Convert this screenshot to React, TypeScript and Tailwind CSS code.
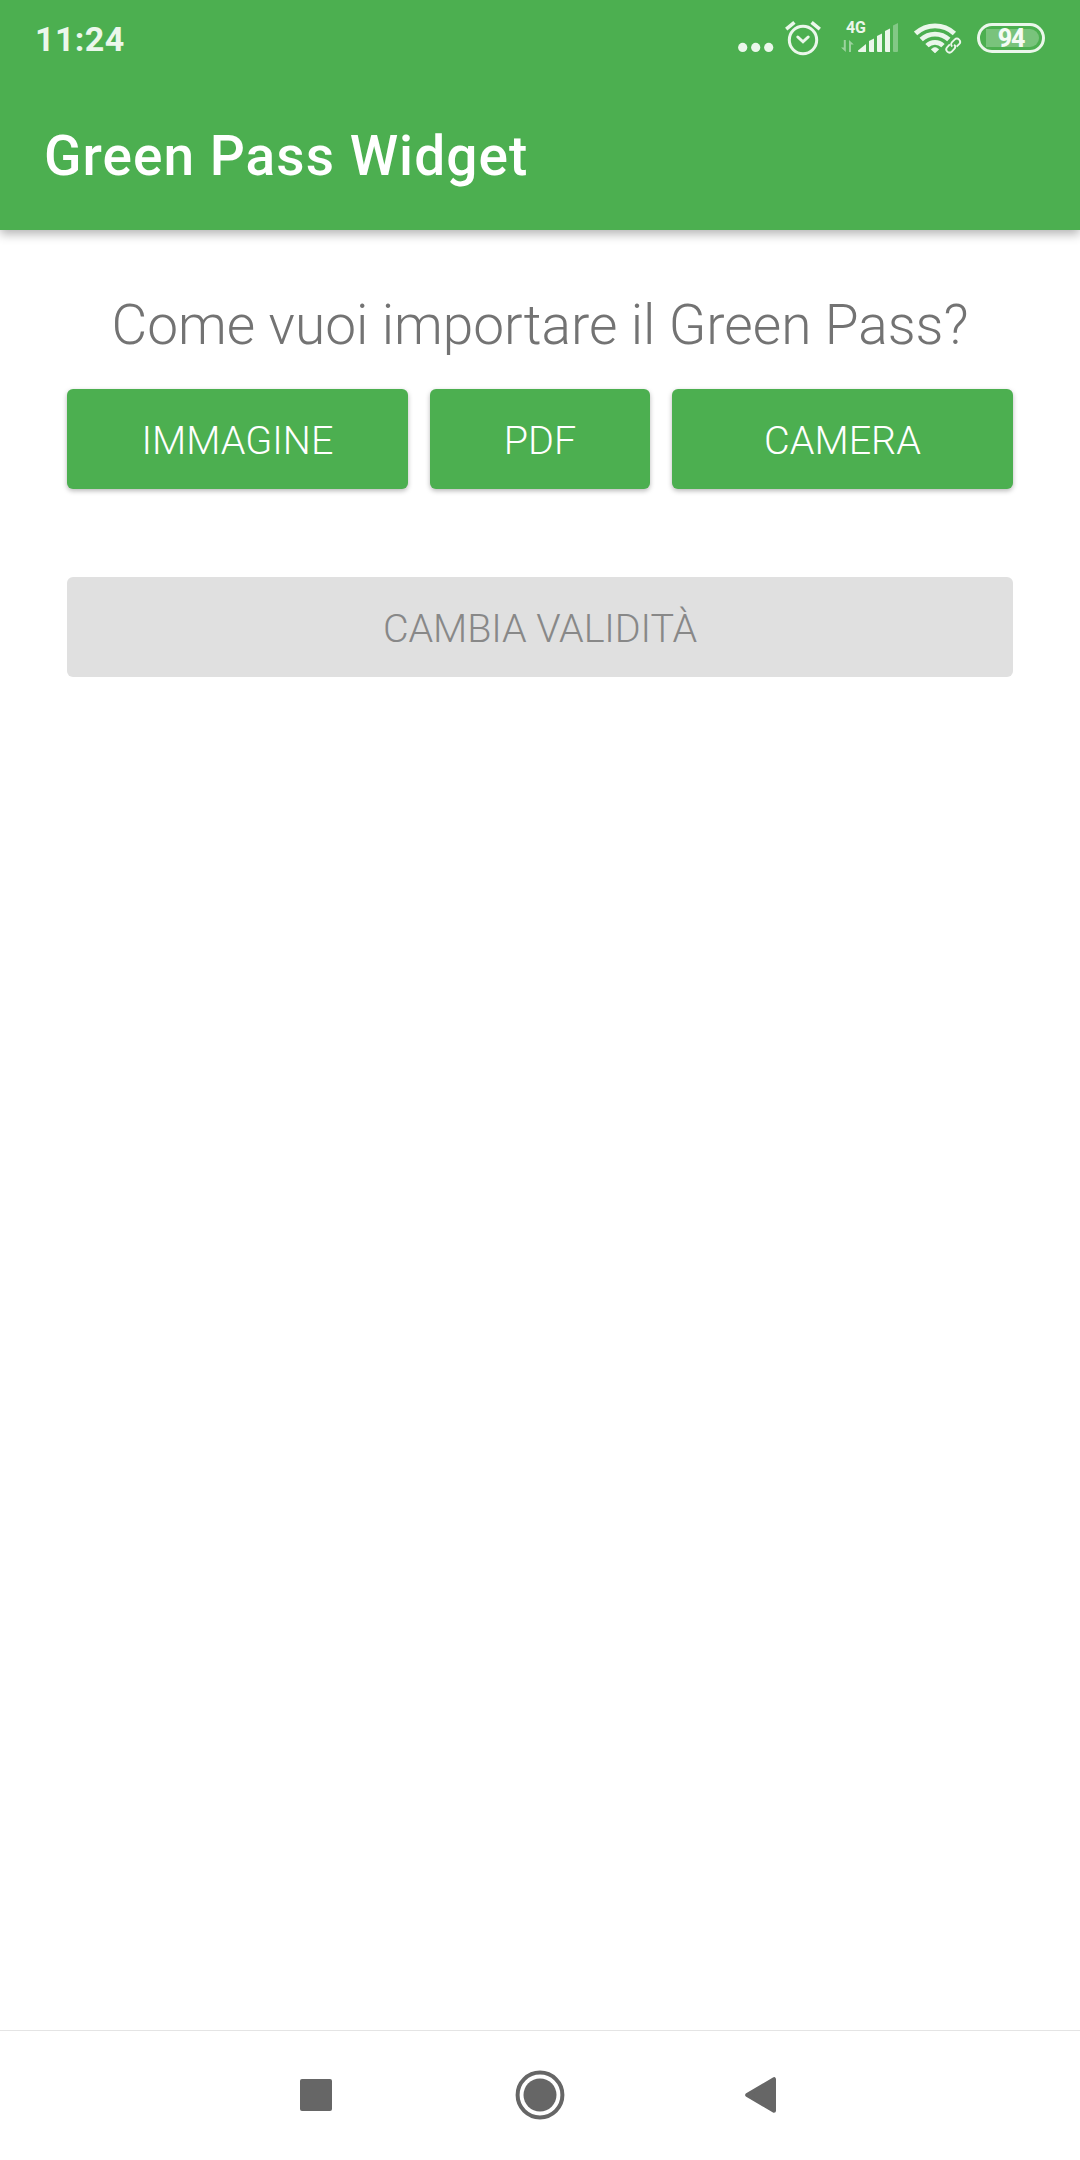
import type { ReactNode } from 'react'
import clsx from 'clsx'

interface ActionButtonProps {
  children: ReactNode
  className?: string
  disabled?: boolean
}

function DotsIcon() {
  return (
    <svg width="36" height="36" viewBox="0 0 36 36" fill="currentColor">
      <circle cx="4.7" cy="27.4" r="4.6" />
      <circle cx="17.7" cy="27.4" r="4.6" />
      <circle cx="30.7" cy="27.4" r="4.6" />
    </svg>
  )
}

function AlarmIcon() {
  return (
    <svg width="36" height="36" viewBox="0 0 36 36" fill="none" stroke="currentColor" strokeWidth="3">
      <circle cx="18" cy="20" r="13.7" />
      <path d="M1.2 9.2L9.4 2.4M26.6 2.4L34.8 9.2" strokeWidth="3.6" />
      <path d="M12.8 17L18 21.8L23.2 17" strokeLinecap="round" />
    </svg>
  )
}

function SignalIcon() {
  return (
    <div className="relative h-9 w-[58px]">
      <span className="absolute left-[5px] top-px text-[16px] font-bold leading-[13px] tracking-[-0.2px]">4G</span>
      <svg width="58" height="36" viewBox="0 0 58 36" fill="currentColor">
        {/* Data arrows */}
        <path d="M2.8 20H4.8V32L0 27.4H2.8ZM8 32V20L12.8 24.6H10V32Z" opacity="0.5" />
        <path d="M17 30.4L25 24V32H18Q17 32 17 31Z" />
        <path d="M28 21L33 18.6V32H29Q28 32 28 31Z" />
        <path d="M36 16L41 13.6V32H37Q36 32 36 31Z" />
        <path d="M44 11L49 8.4V32H45Q44 32 44 31Z" />
        <path d="M52 5.4L57 3V31Q57 32 56 32H53Q52 32 52 31Z" opacity="0.35" />
      </svg>
    </div>
  )
}

function WifiIcon() {
  return (
    <svg width="48" height="36" viewBox="0 0 48 36" fill="none" stroke="currentColor">
      <path d="M1.6 13.4A28.5 28.5 0 0 1 40.4 13.4" strokeWidth="4.8" />
      <path d="M7.2 19.6A20 20 0 0 1 34.8 19.6" strokeWidth="4.8" />
      <path d="M13 25.6A11.5 11.5 0 0 1 29 25.6" strokeWidth="4.8" />
      <path d="M21 33L17.2 29.4Q21 25.6 24.8 29.4Z" fill="currentColor" strokeWidth="0.6" />
      {/* Link badge */}
      <g transform="translate(39.2 25.6) rotate(-45)" strokeWidth="1.8">
        <path d="M-1.6 -3.2H-5.2A3.2 3.2 0 0 0 -5.2 3.2H-1.6A3.2 3.2 0 0 0 1.4 0" />
        <path d="M1.6 3.2H5.2A3.2 3.2 0 0 0 5.2 -3.2H1.6A3.2 3.2 0 0 0 -1.4 0" />
      </g>
    </svg>
  )
}

function Battery({ level }: { level: number }) {
  return (
    <div className="mt-[3px] flex h-[30px] w-[68px] rounded-full border-[3px] border-current p-[3px] pl-1.5">
      <div className="flex h-[18px] w-[53px] items-center justify-center rounded-l-[3px] rounded-r-full bg-white/25 pr-[3px] text-[25px] font-extrabold leading-none tracking-[-1.2px] text-[#f4fbf4]">
        {level}
      </div>
    </div>
  )
}

function StatusBar() {
  return (
    <div className="flex h-[78px] items-start justify-between pl-[35px] pr-[35px] pt-5 text-[#ebf7eb]">
      <span className="text-[34px] font-bold leading-[38px] tracking-[0.4px]">11:24</span>
      <div className="flex">
        <DotsIcon />
        <div className="ml-[11px]">
          <AlarmIcon />
        </div>
        <div className="ml-5">
          <SignalIcon />
        </div>
        <div className="ml-[15px]">
          <WifiIcon />
        </div>
        <div className="ml-[15px]">
          <Battery level={94} />
        </div>
      </div>
    </div>
  )
}

function ActionButton({ children, className, disabled }: ActionButtonProps) {
  return (
    <button
      disabled={disabled}
      className={clsx(
        'flex h-[100px] items-center justify-center rounded-[6px] pt-[3px] text-[39.5px] font-light',
        disabled
          ? 'bg-[#e0e0e0] tracking-[-0.1px] text-[#888888]'
          : 'bg-[#4caf50] text-white shadow-[0_2px_5px_rgba(0,0,0,0.28)]',
        className
      )}
    >
      {children}
    </button>
  )
}

function NavigationBar() {
  return (
    <nav className="flex h-[130px] items-center justify-between border-t border-[#e4e4e4] pb-px pl-[300px] pr-[304px] text-[#666666]">
      <button aria-label="Recenti" className="h-8 w-8 rounded-[2px] bg-current" />
      <button aria-label="Home" className="ml-[3px]">
        <svg width="50" height="50" viewBox="0 0 50 50" fill="currentColor">
          <circle cx="25" cy="25" r="22.4" fill="none" stroke="currentColor" strokeWidth="4" />
          <circle cx="25" cy="25" r="16.5" />
        </svg>
      </button>
      <button aria-label="Indietro">
        <svg width="31" height="38" viewBox="0 0 31 38" fill="currentColor" stroke="currentColor" strokeWidth="4" strokeLinejoin="round">
          <path d="M2.2 19L29 3.2V34.8Z" />
        </svg>
      </button>
    </nav>
  )
}

export default function App() {
  return (
    <div className="flex h-[2160px] w-[1080px] flex-col bg-white font-[Roboto,sans-serif]">
      <header className="h-[230px] bg-[#4caf50] shadow-[0_4px_10px_rgba(0,0,0,0.3)]">
        <StatusBar />
        <h1 className="pl-11 pt-[46px] text-[55px] font-medium leading-[64px] tracking-[1.03px] text-white">
          Green Pass Widget
        </h1>
      </header>

      <main className="flex flex-1 flex-col px-[67px] pt-[62px]">
        <p className="whitespace-nowrap text-center text-[55px] font-light leading-[66px] tracking-[-0.03px] text-[#737373]">
          Come vuoi importare il Green Pass?
        </p>
        <div className="mt-[31px] flex gap-[22px]">
          <ActionButton className="w-[341px]">IMMAGINE</ActionButton>
          <ActionButton className="w-[220px]">PDF</ActionButton>
          <ActionButton className="w-[341px]">CAMERA</ActionButton>
        </div>
        <ActionButton className="mt-[88px] w-full" disabled>
          CAMBIA VALIDITÀ
        </ActionButton>
      </main>

      <NavigationBar />
    </div>
  )
}
